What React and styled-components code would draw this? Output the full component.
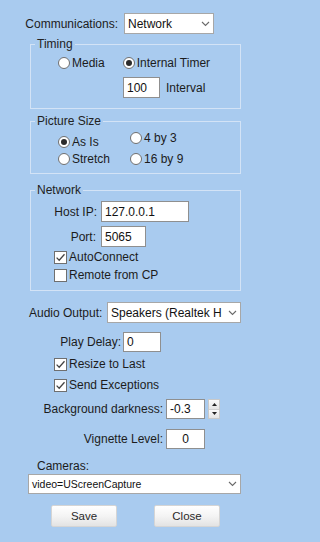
import React from 'react'
import styled, { createGlobalStyle } from 'styled-components'

const GlobalStyle = createGlobalStyle`
  html, body {
    margin: 0;
    padding: 0;
    background: #a9cbef;
  }
  body {
    font-family: "Liberation Sans", Arial, sans-serif;
    font-size: 12px;
    color: #1c1c1c;
  }
`

const Page = styled.div`
  width: 272px;
  min-height: 542px;
  display: flex;
  flex-direction: column;
  box-sizing: border-box;
  padding-top: 13px;
`

const Line = styled.div`
  display: flex;
  align-items: center;
  margin-top: ${p => p.$top || 0}px;
  padding-left: ${p => p.$left || 0}px;
  height: ${p => p.$h || 16}px;
  line-height: 14px;
`

const LabeledRow = styled.div`
  display: grid;
  grid-template-columns: ${p => p.$labelEnd}px auto;
  column-gap: ${p => p.$gap || 4}px;
  align-items: center;
  margin-top: ${p => p.$top || 0}px;
  line-height: 14px;
`

const Label = styled.span`
  text-align: right;
  white-space: nowrap;
  padding-left: ${p => p.$left || 0}px;
  justify-self: ${p => (p.$left ? 'start' : 'end')};
`

const Group = styled.fieldset`
  margin: ${p => p.$top || 0}px 0 0 30px;
  width: 211px;
  box-sizing: border-box;
  border: 1px solid #d3e3f6;
  padding: ${p => p.$pt || 0}px 0 ${p => p.$pb || 0}px 0;
  min-inline-size: 0;
`

const Legend = styled.legend`
  margin-left: 4px;
  padding: 0 2px;
  line-height: 14px;
  font-size: 12px;
  color: #222;
`

const TextBox = styled.div`
  box-sizing: border-box;
  width: ${p => p.$w}px;
  height: ${p => p.$h || 21}px;
  background: #fff;
  border: 1px solid #8f8f8f;
  padding: 0 3px;
  display: flex;
  align-items: center;
  justify-content: ${p => (p.$center ? 'center' : 'flex-start')};
  font-size: 12px;
  color: #111;
  white-space: nowrap;
  overflow: hidden;
`

const Combo = styled.div`
  box-sizing: border-box;
  width: ${p => p.$w}px;
  height: ${p => p.$h || 21}px;
  background: #fff;
  border: 1px solid #a7a7a7;
  display: flex;
  align-items: center;
  padding: 0 0 0 3px;
  font-size: ${p => p.$fs || 12}px;
  color: #111;
  overflow: hidden;
`

const ComboText = styled.span`
  flex: 1;
  white-space: nowrap;
`

const Chevron = styled.span`
  width: 16px;
  flex: none;
  display: flex;
  justify-content: center;
  align-items: center;
`

const RadioItem = styled.label`
  display: flex;
  align-items: center;
  gap: 2px;
  height: 16px;
  white-space: nowrap;
`

const RadioCircle = styled.span`
  box-sizing: border-box;
  width: 12px;
  height: 12px;
  border-radius: 50%;
  border: 1px solid #6f6f6f;
  background: #fff;
  display: flex;
  align-items: center;
  justify-content: center;
  &::after {
    content: '';
    width: 6px;
    height: 6px;
    border-radius: 50%;
    background: ${p => (p.$on ? '#2b2b2b' : 'transparent')};
  }
`

const CheckBox = styled.span`
  box-sizing: border-box;
  width: 13px;
  height: 13px;
  border: 1px solid #6f6f6f;
  background: #fff;
  display: flex;
  align-items: center;
  justify-content: center;
  flex: none;
`

const RadioGrid = styled.div`
  display: grid;
  grid-template-columns: 72px auto;
  padding-left: 27px;
`

const RadioColumn = styled.div`
  display: flex;
  flex-direction: column;
  padding-top: ${p => p.$pt || 0}px;
  gap: ${p => p.$gap || 0}px;
`

const Spinner = styled.div`
  box-sizing: border-box;
  width: 12px;
  height: 20px;
  margin-left: 3px;
  display: flex;
  flex-direction: column;
  border: 1px solid #c9c9c9;
`

const SpinHalf = styled.div`
  flex: 1;
  display: flex;
  align-items: center;
  justify-content: center;
  background: linear-gradient(#fafafa, #e4e4e4);
  & + & {
    border-top: 1px solid #d0d0d0;
  }
`

const Inline = styled.div`
  display: flex;
  align-items: center;
  margin-left: ${p => p.$ml || 0}px;
`

const CameraRow = styled.div`
  display: flex;
  margin-top: 1px;
  padding-left: 28px;
`

const ButtonBar = styled.div`
  display: flex;
  gap: 37px;
  padding-left: 51px;
  margin-top: 11px;
`

const Button = styled.button`
  box-sizing: border-box;
  width: 66px;
  height: 22px;
  border: 1px solid #d5d5d5;
  border-radius: 2px;
  background: linear-gradient(#ffffff 0%, #f4f4f4 50%, #e3e3e3 100%);
  font-family: "Liberation Sans", Arial, sans-serif;
  font-size: 11.5px;
  color: #2a2a2a;
  padding: 0;
`

function ChevronIcon() {
  return (
    <svg width="9" height="6" viewBox="0 0 9 6">
      <path d="M1 1 L4.5 4.5 L8 1" fill="none" stroke="#6a6a6a" strokeWidth="1.1" />
    </svg>
  )
}

function Check({ on, children }) {
  return (
    <RadioItem>
      <CheckBox>
        {on && (
          <svg width="11" height="11" viewBox="0 0 11 11">
            <path d="M1.6 5.6 L4.2 8.2 L9.5 2.2" fill="none" stroke="#444" strokeWidth="1.3" />
          </svg>
        )}
      </CheckBox>
      {children}
    </RadioItem>
  )
}

function Radio({ on, children }) {
  return (
    <RadioItem>
      <RadioCircle $on={on} />
      {children}
    </RadioItem>
  )
}

function Select({ w, h, fs, children }) {
  return (
    <Combo $w={w} $h={h} $fs={fs}>
      <ComboText>{children}</ComboText>
      <Chevron>
        <ChevronIcon />
      </Chevron>
    </Combo>
  )
}

export default function App() {
  return (
    <Page>
      <GlobalStyle />
      <LabeledRow $labelEnd={118} $gap={6}>
        <Label>Communications:</Label>
        <Select w={90}>Network</Select>
      </LabeledRow>

      <Group $top={3} $pt={4} $pb={10}>
        <Legend>Timing</Legend>
        <Line $left={27}>
          <Radio>Media</Radio>
          <Inline $ml={18}>
            <Radio on>Internal Timer</Radio>
          </Inline>
        </Line>
        <Line $left={92} $top={6} $h={21}>
          <TextBox $w={37}>100</TextBox>
          <Inline $ml={6}>Interval</Inline>
        </Line>
      </Group>

      <Group $top={5} $pb={6}>
        <Legend>Picture Size</Legend>
        <RadioGrid>
          <RadioColumn $pt={6} $gap={1}>
            <Radio on>As Is</Radio>
            <Radio>Stretch</Radio>
          </RadioColumn>
          <RadioColumn $pt={2} $gap={5}>
            <Radio>4 by 3</Radio>
            <Radio>16 by 9</Radio>
          </RadioColumn>
        </RadioGrid>
      </Group>

      <Group $top={9} $pt={4} $pb={7}>
        <Legend>Network</Legend>
        <LabeledRow $labelEnd={66} $gap={4}>
          <Label>Host IP:</Label>
          <TextBox $w={88}>127.0.0.1</TextBox>
        </LabeledRow>
        <LabeledRow $labelEnd={65} $gap={5} $top={4}>
          <Label>Port:</Label>
          <TextBox $w={45}>5065</TextBox>
        </LabeledRow>
        <Line $left={23} $top={2}>
          <Check on>AutoConnect</Check>
        </Line>
        <Line $left={23} $top={2}>
          <Check>Remote from CP</Check>
        </Line>
      </Group>

      <LabeledRow $labelEnd={103} $gap={4} $top={11}>
        <Label $left={29}>Audio Output:</Label>
        <Select w={134}>Speakers (Realtek H</Select>
      </LabeledRow>

      <LabeledRow $labelEnd={121} $gap={2} $top={9}>
        <Label>Play Delay:</Label>
        <TextBox $w={38} $h={20}>0</TextBox>
      </LabeledRow>

      <Line $left={54} $top={4}>
        <Check on>Resize to Last</Check>
      </Line>
      <Line $left={54} $top={5}>
        <Check on>Send Exceptions</Check>
      </Line>

      <LabeledRow $labelEnd={163} $gap={3} $top={6}>
        <Label>Background darkness:</Label>
        <Inline>
          <TextBox $w={39} $h={20}>-0.3</TextBox>
          <Spinner>
            <SpinHalf>
              <svg width="5" height="3" viewBox="0 0 5 3"><path d="M0 3 L2.5 0 L5 3 Z" fill="#222" /></svg>
            </SpinHalf>
            <SpinHalf>
              <svg width="5" height="3" viewBox="0 0 5 3"><path d="M0 0 L2.5 3 L5 0 Z" fill="#222" /></svg>
            </SpinHalf>
          </Spinner>
        </Inline>
      </LabeledRow>

      <LabeledRow $labelEnd={163} $gap={3} $top={10}>
        <Label>Vignette Level:</Label>
        <TextBox $w={39} $h={20} $center>0</TextBox>
      </LabeledRow>

      <Line $left={37} $top={10} $h={14}>Cameras:</Line>
      <CameraRow>
        <Select w={213} h={20} fs={10.5}>video=UScreenCapture</Select>
      </CameraRow>

      <ButtonBar>
        <Button>Save</Button>
        <Button>Close</Button>
      </ButtonBar>
    </Page>
  )
}
